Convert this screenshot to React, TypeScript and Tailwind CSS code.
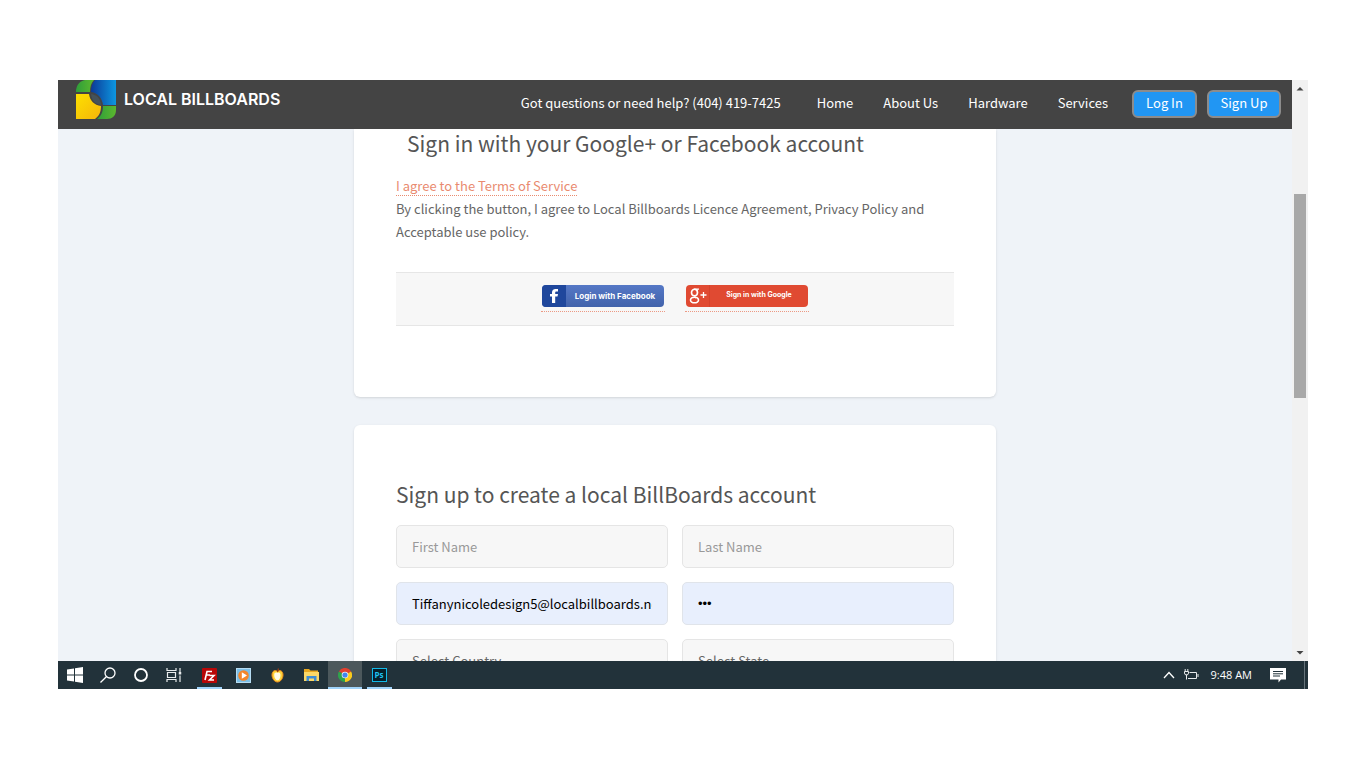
import type { ReactNode } from 'react'

const NAV_LINKS = ['Home', 'About Us', 'Hardware', 'Services']

function Logo() {
  return (
    <a href="#home" className="flex shrink-0 items-start gap-[7px] pl-[18px]">
      <svg width="41" height="39" viewBox="0 0 41 39" aria-hidden="true">
        <defs>
          <linearGradient id="logoBlue" x1="0" y1="0" x2="1" y2="0">
            <stop offset="0" stopColor="#0b3a98" />
            <stop offset="1" stopColor="#0d97e0" />
          </linearGradient>
          <linearGradient id="logoYellow" x1="0" y1="0" x2="1" y2="1">
            <stop offset="0" stopColor="#fde000" />
            <stop offset="1" stopColor="#f5b50a" />
          </linearGradient>
          <linearGradient id="logoGreen" x1="0" y1="0" x2="1" y2="0">
            <stop offset="0" stopColor="#2f9e3a" />
            <stop offset="1" stopColor="#5cb82e" />
          </linearGradient>
        </defs>
        <path d="M0 12V10C1 4 4 1 9 0H18C15 3 14 7 14 12Z" fill="url(#logoGreen)" />
        <path d="M19 0H40V25H27C26 18 22 13 15 12C15 7 16 3 19 0Z" fill="url(#logoBlue)" />
        <path d="M0 14H13C14 21 18 25 25 26C25 32 23 36 19 39H0Z" fill="url(#logoYellow)" />
        <path d="M15 14C21 15 24 18 25 25C19 24 16 21 15 14Z" fill="#45525a" />
        <path d="M27 26H40V30C40 36 36 39 31 39H21C25 36 27 32 27 26Z" fill="url(#logoGreen)" />
      </svg>
      <span className="font-['Inter',sans-serif] text-base leading-[38px] font-semibold text-white">LOCAL BILLBOARDS</span>
    </a>
  )
}

function Header() {
  return (
    <header className="flex h-[49px] shrink-0 items-start justify-between bg-[#444444] pr-[11px] text-[13px] text-white">
      <Logo />
      <nav className="flex h-[47px] items-center">
        <span className="mr-9 pb-0.5">Got questions or need help? (404) 419-7425</span>
        {NAV_LINKS.map((label) => (
          <a key={label} href="#nav" className="mr-[30px] pb-0.5 last-of-type:mr-6">
            {label}
          </a>
        ))}
        <button className="mr-[10px] h-7 w-[65px] rounded-md border-2 border-[#8c8c8c] bg-[#2196f3] pb-0.5">Log In</button>
        <button className="h-7 w-[74px] rounded-md border-2 border-[#8c8c8c] bg-[#2196f3] pb-0.5">Sign Up</button>
      </nav>
    </header>
  )
}

function SocialButtons() {
  return (
    <div className="mt-[29px] flex h-[54px] items-center justify-center gap-5 border-y border-[#e6e6e6] bg-[#f7f7f7] pb-0.5 font-['Inter',sans-serif] text-[8px] font-bold text-white">
      <a href="#facebook" className="border-b border-dotted border-[#ec9a84] px-px pb-1">
        <span className="flex h-[22px] w-[122px] overflow-hidden rounded-sm bg-linear-to-b from-[#5578c6] to-[#4263ab]">
          <span className="flex w-6 items-center justify-center bg-[#1f479c]">
            <svg width="10" height="16" viewBox="0 0 10 16" aria-hidden="true">
              <path d="M3 15V8.500H1V6H3V4.500C3 2.200 4.300 1 6.500 1H9V3.500H7.500C6.600 3.500 6.200 3.900 6.200 4.700V6H9L8.500 8.500H6.200V15Z" fill="#fff" />
            </svg>
          </span>
          <span className="flex flex-1 items-center justify-center">Login with Facebook</span>
        </span>
      </a>
      <a href="#google" className="border-b border-dotted border-[#ec9a84] px-px pb-1">
        <span className="flex h-[22px] w-[122px] overflow-hidden rounded-sm bg-[#e04a32]">
          <span className="flex w-6 items-center justify-center border-r border-[#d6422b]">
            <svg width="18" height="16" viewBox="0 0 18 16" aria-hidden="true" fill="none" stroke="#fff">
              <ellipse cx="5.500" cy="4.500" rx="3" ry="3.300" strokeWidth="1.600" />
              <path d="M5 1.200H10M7.500 1.500C8.500 2.500 8.800 3.300 8.500 5M6 8C5.500 9 6 9.300 7 10" strokeWidth="1.200" />
              <ellipse cx="5.500" cy="12" rx="4" ry="2.800" strokeWidth="1.600" />
              <path d="M11.500 7H17.500M14.500 4V10" strokeWidth="1.300" />
            </svg>
          </span>
          <span className="flex flex-1 items-center justify-center text-[7px]">Sign in with Google</span>
        </span>
      </a>
    </div>
  )
}

const fieldClass =
  'h-[43px] w-full appearance-none rounded-[5px] border border-[#e5e5e5] bg-[#f7f7f7] px-[15px] text-[13px] text-[#666666] outline-none placeholder:text-[#999999]'
const filledClass =
  'h-[43px] w-full rounded-[5px] border border-[#e0e4ea] bg-[#e8effd] px-[15px] text-[13px] text-black outline-none'

function SignUpForm() {
  return (
    <form className="mt-[17px] grid grid-cols-2 gap-[14px]">
      <input aria-label="First Name" placeholder="First Name" className={fieldClass} />
      <input aria-label="Last Name" placeholder="Last Name" className={fieldClass} />
      <input aria-label="Email" type="email" defaultValue="Tiffanynicoledesign5@localbillboards.net" className={filledClass} />
      <input
        aria-label="Password"
        type="password"
        defaultValue="abc"
        className={`${filledClass} font-['Liberation_Sans',sans-serif]`}
      />
      <select aria-label="Country" className={fieldClass}>
        <option>Select Country</option>
      </select>
      <select aria-label="State" className={fieldClass}>
        <option>Select State</option>
      </select>
    </form>
  )
}

function Scrollbar() {
  return (
    <div className="flex w-4 shrink-0 flex-col items-center bg-[#f1f1f1]" aria-hidden="true">
      <svg width="16" height="16" viewBox="0 0 16 16">
        <path d="M4.500 10.500L8 7L11.500 10.500Z" fill="#444" />
      </svg>
      <div className="mt-[98px] h-[204px] w-3 bg-[#a8a8a8]" />
      <svg width="16" height="16" viewBox="0 0 16 16" className="mt-auto">
        <path d="M4.500 6L8 9.500L11.500 6Z" fill="#444" />
      </svg>
    </div>
  )
}

interface TaskButtonProps {
  label: string
  state?: 'open' | 'active'
  children: ReactNode
}

function TaskButton({ label, state, children }: TaskButtonProps) {
  return (
    <button
      aria-label={label}
      className={`relative flex h-full items-center justify-center ${state === 'active' ? 'bg-[#4c585c]' : ''}`}
    >
      {children}
      {state && <span className={`absolute bottom-0 h-[2px] bg-[#9fd3fb] ${state === 'active' ? 'w-full' : 'w-[25px]'}`} />}
    </button>
  )
}

function Taskbar() {
  return (
    <footer className="flex h-7 shrink-0 items-center bg-[#22323a] text-white">
      <div className="grid h-full w-[132px] grid-cols-4">
        <TaskButton label="Start">
          <svg width="16" height="16" viewBox="0 0 16 16" fill="#fff">
            <path d="M0 2.500L7 1.500V7.500H0ZM8 1.300L16 0V7.500H8ZM0 8.500H7V14.500L0 13.500ZM8 8.500H16V16L8 14.700Z" />
          </svg>
        </TaskButton>
        <TaskButton label="Search">
          <svg width="16" height="16" viewBox="0 0 16 16" fill="none" stroke="#fff" strokeWidth="1.300">
            <circle cx="10" cy="6" r="5" />
            <path d="M6.300 9.700L0.500 15.500" />
          </svg>
        </TaskButton>
        <TaskButton label="Cortana">
          <svg width="14" height="14" viewBox="0 0 14 14" fill="none" stroke="#fff" strokeWidth="1.800">
            <circle cx="7" cy="7" r="6" />
          </svg>
        </TaskButton>
        <TaskButton label="Task view">
          <svg width="16" height="16" viewBox="0 0 16 16" fill="none" stroke="#e8ebec" strokeWidth="1.200">
            <path d="M1 1V3.500H10V1M1 15V12.500H10V15M1.500 5.500H9.500V10.500H1.500ZM14 1V5M14 8.500V15" />
            <path d="M14 5V7.500" strokeWidth="2.500" />
          </svg>
        </TaskButton>
      </div>
      <div className="ml-0.5 grid h-full w-[204px] grid-cols-6">
        <TaskButton label="FileZilla" state="open">
          <svg width="15" height="15" viewBox="0 0 15 15">
            <rect width="15" height="15" rx="1" fill="#b80707" />
            <path d="M3 12L5 3.500H10M4.200 7H8M7.500 7.500H12L7.500 12H12" fill="none" stroke="#fff" strokeWidth="1.600" />
          </svg>
        </TaskButton>
        <TaskButton label="Media player">
          <svg width="15" height="15" viewBox="0 0 15 15">
            <rect x="0.500" y="0.500" width="14" height="14" fill="#7dbfe6" stroke="#b6dcf2" />
            <circle cx="7.500" cy="7.500" r="5.300" fill="#f4862a" />
            <path d="M5.800 4.300L11 7.500L5.800 10.700Z" fill="#fff" />
          </svg>
        </TaskButton>
        <TaskButton label="Fruit">
          <svg width="13" height="15" viewBox="0 0 13 15">
            <path d="M6.500 3.500C4 1.500 1 3 1 7C1 10.500 3.500 14 6.500 14S12 10.500 12 7C12 3 9 1.500 6.500 3.500Z" fill="#ffd43a" stroke="#f08b1d" />
            <path d="M6.500 5C5 4 3.200 4.500 3.200 7C3.200 9.500 4.700 12.300 6.500 12.300S9.500 10 9.500 7C9.500 5 8 4 6.500 5Z" fill="#fffbe8" />
            <path d="M6.500 4L7.500 0.500" stroke="#9c3c12" strokeWidth="1.200" />
          </svg>
        </TaskButton>
        <TaskButton label="File Explorer">
          <svg width="15" height="14" viewBox="0 0 15 14">
            <path d="M0 1H5L6.500 2.500H14V12H0Z" fill="#e8a820" />
            <path d="M0 4H15V13H0Z" fill="#fbd867" />
            <path d="M2.500 13V8H12.500V13H10V10.500H5V13Z" fill="#3f8dd2" />
          </svg>
        </TaskButton>
        <TaskButton label="Chrome" state="active">
          <svg width="14" height="14" viewBox="0 0 14 14">
            <path d="M7 7L0.900 3.500A7 7 0 0 1 13.100 3.500Z" fill="#e2402f" />
            <path d="M7 7L13.100 3.500A7 7 0 0 1 7 14Z" fill="#fbcb1c" />
            <path d="M7 7L7 14A7 7 0 0 1 0.900 3.500Z" fill="#2fa24c" />
            <circle cx="7" cy="7" r="3.300" fill="#f2f2f2" />
            <circle cx="7" cy="7" r="2.600" fill="#4385ee" />
          </svg>
        </TaskButton>
        <TaskButton label="Photoshop" state="open">
          <span className="flex h-[14px] w-[15px] items-center justify-center border border-[#12b9e8] bg-[#06202c] font-['Open_Sans',sans-serif] text-[8px] font-bold text-[#20c2f0]">
            Ps
          </span>
        </TaskButton>
      </div>

      <div className="ml-auto flex h-full items-center">
        <svg width="12" height="8" viewBox="0 0 12 8" fill="none" stroke="#fff" strokeWidth="1.300" className="mr-2">
          <path d="M1 7L6 1.500L11 7" />
        </svg>
        <svg width="16" height="12" viewBox="0 0 16 12" fill="none" stroke="#e8ebec" className="mr-3">
          <path d="M2.200 0V2.500M4.800 0V2.500M3.500 5.500V10.500M6.500 3.500H13.500V9.500H5M15 5V8" />
          <path d="M1.500 2.500H5.500V4A2 2 0 0 1 1.500 4Z" />
        </svg>
        <time className="font-['Open_Sans',sans-serif] text-[11px]">9:48 AM</time>
        <svg width="16" height="15" viewBox="0 0 16 15" className="mr-[18px] ml-[18px]">
          <path d="M0 0H16V11.500H11L8.500 14.500V11.500H0Z" fill="#fff" />
          <path d="M3 3.500H13M3 5.800H13M3 8H10" stroke="#22323a" />
        </svg>
        <span className="mr-[3px] h-full w-px bg-[#66737a]" />
      </div>
    </footer>
  )
}

export default function App() {
  return (
    <div className="h-screen bg-white px-[58px] pt-20 pb-[79px] font-['Noto_Sans_CJK_SC',sans-serif] text-[#666666]">
      <div className="flex h-full flex-col">
        <div className="flex min-h-0 flex-1">
          <div className="flex min-w-0 flex-1 flex-col bg-[#eff3f8]">
            <Header />
            <main className="min-h-0 flex-1 overflow-hidden">
              <section className="mx-auto h-[268px] max-w-[642px] rounded-b-md bg-white px-[42px] shadow-sm">
                <h2 className="pl-[11px] text-[21px] leading-7 text-[#555555]">Sign in with your Google+ or Facebook account</h2>
                <p className="mt-[17px] text-[13px] leading-[23px]">
                  <a href="#terms" className="border-b border-dotted border-[#e98b70] text-[#e98b70]">
                    I agree to the Terms of Service
                  </a>
                  <br />
                  By clicking the button, I agree to Local Billboards Licence Agreement, Privacy Policy and Acceptable use
                  policy.
                </p>
                <SocialButtons />
              </section>
              <section className="mx-auto mt-7 max-w-[642px] rounded-md bg-white px-[42px] pt-[55px] pb-10 shadow-sm">
                <h2 className="text-[21px] leading-7 text-[#555555]">Sign up to create a local BillBoards account</h2>
                <SignUpForm />
              </section>
            </main>
          </div>
          <Scrollbar />
        </div>
        <Taskbar />
      </div>
    </div>
  )
}
